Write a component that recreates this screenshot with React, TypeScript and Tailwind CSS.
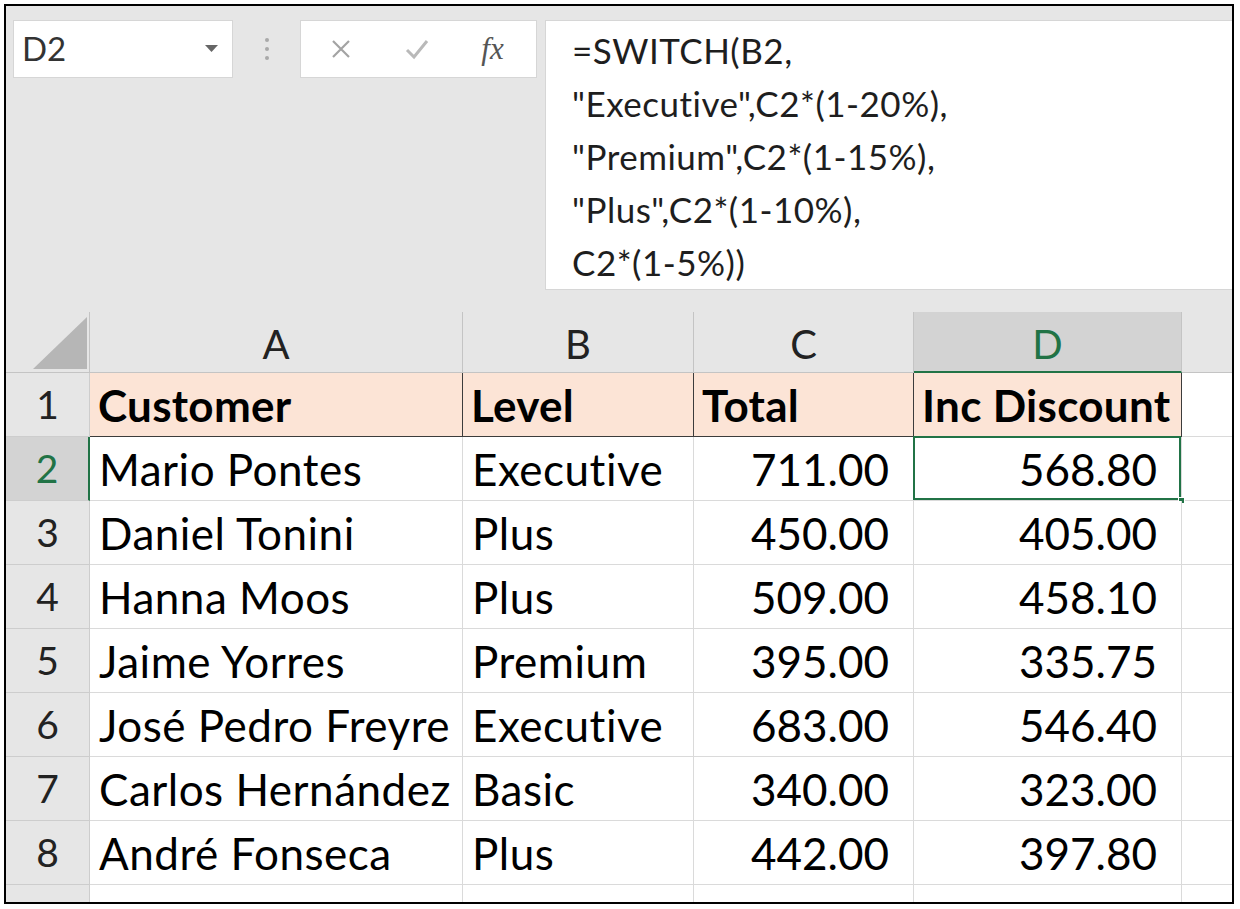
import React from 'react';

const FONT = { fontFamily: 'Lato, "Noto Sans", sans-serif' };

const data: [string, string, string, string][] = [
  ['Mario Pontes', 'Executive', '711.00', '568.80'],
  ['Daniel Tonini', 'Plus', '450.00', '405.00'],
  ['Hanna Moos', 'Plus', '509.00', '458.10'],
  ['Jaime Yorres', 'Premium', '395.00', '335.75'],
  ['José Pedro Freyre', 'Executive', '683.00', '546.40'],
  ['Carlos Hernández', 'Basic', '340.00', '323.00'],
  ['André Fonseca', 'Plus', '442.00', '397.80'],
];

const formula = [
  '=SWITCH(B2,',
  '"Executive",C2*(1-20%),',
  '"Premium",C2*(1-15%),',
  '"Plus",C2*(1-10%),',
  'C2*(1-5%))',
];

const rowHead = 'bg-[#e6e6e6] border-r border-b border-[#cdcdcd] flex items-center justify-center text-[39px] text-[#222]';
const cell = 'bg-white border-r border-b border-[#dadada] flex items-center text-[44px] text-black whitespace-nowrap overflow-hidden';

const FormulaBar: React.FC = () => (
  <div className="h-[306px] shrink-0 bg-[#e6e6e6] flex items-start pt-[14px] pl-[7px]">
    <div className="w-[220px] h-[58px] bg-white border border-[#d6d6d6] flex items-center justify-between pl-[8px] pr-[14px]">
      <span className="text-[33px] text-[#333]">D2</span>
      <svg width="13" height="8" viewBox="0 0 13 8">
        <polygon points="0,0 13,0 6.5,7" fill="#666" />
      </svg>
    </div>
    <div className="w-[67px] h-[58px] flex flex-col items-center justify-center gap-[5px]">
      <span className="w-[4px] h-[4px] rounded-full bg-[#a9a9a9]" />
      <span className="w-[4px] h-[4px] rounded-full bg-[#a9a9a9]" />
      <span className="w-[4px] h-[4px] rounded-full bg-[#a9a9a9]" />
    </div>
    <div className="w-[237px] h-[58px] bg-white border border-[#d6d6d6] flex items-center">
      <div className="w-[80px] flex justify-center">
        <svg width="24" height="24" viewBox="0 0 24 24">
          <path d="M4 4 L20 20 M20 4 L4 20" stroke="#a3a3a3" strokeWidth="2.2" fill="none" />
        </svg>
      </div>
      <div className="w-[72px] flex justify-center">
        <svg width="26" height="22" viewBox="0 0 26 22">
          <path d="M3 12 L10 19 L23 3" stroke="#b9b9b9" strokeWidth="3" fill="none" />
        </svg>
      </div>
      <div className="flex-1 flex justify-center pr-[4px]">
        <span className="text-[31px] italic text-[#555]" style={{ fontFamily: '"Liberation Serif", serif' }}>fx</span>
      </div>
    </div>
    <div className="ml-[8px] flex-1 h-[270px] bg-white border-l border-t border-b border-[#d6d6d6] pl-[26px] pt-[3px]">
      {formula.map((line, i) => (
        <div key={i} className="leading-[53px] text-[35px] tracking-[0.5px] text-[#1e1e1e] whitespace-nowrap">{line}</div>
      ))}
    </div>
  </div>
);

const Sheet: React.FC = () => (
  <div className="flex-1 grid grid-cols-[84px_373px_231px_220px_268px_1fr] grid-rows-[61px_repeat(8,64px)_1fr]">
    {/* column header row */}
    <div className="bg-[#e6e6e6] border-r border-b border-[#c4c4c4] flex items-end justify-end pr-[2px] pb-[3px]">
      <svg width="54" height="52" viewBox="0 0 54 52">
        <polygon points="0,52 54,52 54,0" fill="#b6b6b6" />
      </svg>
    </div>
    {['A', 'B', 'C'].map(l => (
      <div key={l} className="bg-[#e6e6e6] border-r border-b border-[#c4c4c4] flex items-center justify-center pt-[4px] text-[40px] text-[#222]">{l}</div>
    ))}
    <div className="bg-[#d3d3d3] border-r border-[#c4c4c4] border-b-2 border-b-[#217346] flex items-center justify-center pt-[4px] text-[40px] text-[#217346]">D</div>
    <div className="bg-[#e6e6e6] border-b border-[#c4c4c4]" />

    {/* row 1 */}
    <div className={rowHead}>1</div>
    {['Customer', 'Level', 'Total', 'Inc Discount'].map(h => (
      <div key={h} className="bg-[#fce4d6] border-r border-b border-[#3c3c3c] flex items-center pl-[8px] text-[44px] tracking-[0.3px] font-bold text-black whitespace-nowrap overflow-hidden">{h}</div>
    ))}
    <div className="bg-white border-b border-[#dadada]" />

    {/* data rows */}
    {data.map((r, i) => {
      const n = i + 2;
      const sel = n === 2;
      return (
        <React.Fragment key={n}>
          <div className={sel ? 'bg-[#d3d3d3] border-r-2 border-r-[#217346] border-b border-b-[#cdcdcd] flex items-center justify-center text-[39px] text-[#217346]' : rowHead}>{n}</div>
          <div className={`${cell} pl-[9px] tracking-[0.5px]`}>{r[0]}</div>
          <div className={`${cell} pl-[9px] tracking-[0.5px]`}>{r[1]}</div>
          <div className={`${cell} justify-end pr-[24px]`}>{r[2]}</div>
          <div className={`${cell} justify-end pr-[24px] relative overflow-visible`}>
            {r[3]}
            {sel && (
              <>
                <div className="absolute -left-[1px] -top-[1px] right-0 bottom-0 border-2 border-[#217346]" />
                <div className="absolute -right-[4px] -bottom-[4px] w-[7px] h-[7px] bg-[#217346] border border-white" />
              </>
            )}
          </div>
          <div className="bg-white border-b border-[#dadada]" />
        </React.Fragment>
      );
    })}

    {/* partial row 9 */}
    <div className="bg-[#e6e6e6] border-r border-[#cdcdcd]" />
    <div className="bg-white border-r border-[#dadada]" />
    <div className="bg-white border-r border-[#dadada]" />
    <div className="bg-white border-r border-[#dadada]" />
    <div className="bg-white border-r border-[#dadada]" />
    <div className="bg-white" />
  </div>
);

export default function App() {
  return (
    <div className="w-[1240px] h-[909px] bg-white pt-[4px] pl-[4px]" style={FONT}>
      <div className="w-[1230px] h-[900px] border-2 border-black overflow-hidden flex flex-col">
        <FormulaBar />
        <Sheet />
      </div>
    </div>
  );
}
